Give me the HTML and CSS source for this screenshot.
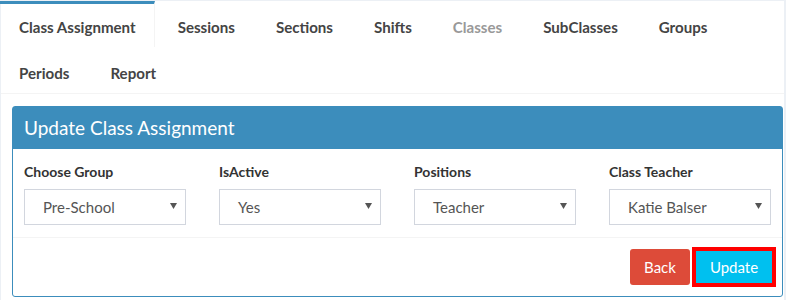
FILE: index.html
```html
<!DOCTYPE html>
<html lang="en">
<head>
  <meta charset="UTF-8">
  <title>Class Assignment</title>
  <link rel="stylesheet" href="styles.css">
</head>
<body>

  <div class="tabs-box">
    <ul class="nav-tabs">
      <li class="active"><a href="#">Class Assignment</a></li>
      <li><a href="#">Sessions</a></li>
      <li><a href="#">Sections</a></li>
      <li><a href="#">Shifts</a></li>
      <li class="disabled"><a href="#">Classes</a></li>
      <li><a href="#">SubClasses</a></li>
      <li><a href="#">Groups</a></li>
      <li><a href="#">Periods</a></li>
      <li><a href="#">Report</a></li>
    </ul>

    <div class="tab-content">
      <div class="panel">
        <div class="panel-heading">Update Class Assignment</div>
        <div class="panel-body">
          <div class="field">
            <label>Choose Group</label>
            <div class="select"><span>Pre-School</span><svg class="caret" viewBox="0 0 7 6"><polygon points="0,0 7,0 3.5,6"/></svg></div>
          </div>
          <div class="field">
            <label>IsActive</label>
            <div class="select"><span>Yes</span><svg class="caret" viewBox="0 0 7 6"><polygon points="0,0 7,0 3.5,6"/></svg></div>
          </div>
          <div class="field">
            <label>Positions</label>
            <div class="select"><span>Teacher</span><svg class="caret" viewBox="0 0 7 6"><polygon points="0,0 7,0 3.5,6"/></svg></div>
          </div>
          <div class="field">
            <label>Class Teacher</label>
            <div class="select"><span>Katie Balser</span><svg class="caret" viewBox="0 0 7 6"><polygon points="0,0 7,0 3.5,6"/></svg></div>
          </div>
        </div>
        <div class="panel-footer">
          <button class="btn btn-back">Back</button>
          <button class="btn btn-update">Update</button>
        </div>
      </div>
    </div>
  </div>

</body>
</html>
```

FILE: styles.css
```css
body {
  margin: 0;
  font-family: Lato, "Liberation Sans", sans-serif;
  background-color: #ecf0f5;
  color: #333;
}
.tabs-box {
  background-color: #fff;
  margin-left: 1px;
  margin-top: 1px;
  margin-right: 2px;
  height: 299px;
}
.nav-tabs {
  list-style: none;
  margin: 0;
  padding: 0;
  display: flex;
  flex-wrap: wrap;
  border-bottom: 1px solid #f4f4f4;
}
.nav-tabs li {
  margin-right: 5px;
  border-top: 3px solid transparent;
}
.nav-tabs li a {
  display: block;
  padding: 0 18px;
  height: 43px;
  line-height: 46px;
  font-size: 15.1px;
  font-weight: bold;
  color: #444;
  text-decoration: none;
}
.nav-tabs li.active {
  border-top-color: #3c8dbc;
  border-right: 1px solid #f4f4f4;
  margin-left: -1px;
  padding-left: 1px;
}
.nav-tabs li.disabled a {
  color: #999;
}
.tab-content {
  padding: 12px 1px 0 11px;
}
.panel {
  border: 1px solid #3c8dbc;
  border-radius: 3px;
  background-color: #fff;
}
.panel-heading {
  background-color: #3c8dbc;
  color: #fff;
  font-size: 19px;
  height: 42px;
  line-height: 42px;
  padding-left: 11px;
}
.panel-body {
  display: grid;
  grid-template-columns: repeat(4, 195px);
  padding: 14px 11px 12px;
  border-bottom: 1px solid #f4f4f4;
}
.field label {
  display: block;
  font-size: 14px;
  font-weight: bold;
  color: #333;
  line-height: 18px;
  margin-bottom: 8px;
}
.select {
  width: 162px;
  height: 36px;
  box-sizing: border-box;
  border: 1px solid #d2d6de;
  display: flex;
  align-items: center;
  justify-content: space-between;
  padding: 0 8px 0 18px;
  font-size: 15px;
  color: #555;
}
.caret {
  width: 7px;
  height: 6px;
  fill: #555;
  margin-top: -3px;
}
.panel-footer {
  display: flex;
  justify-content: flex-end;
  gap: 4px;
  padding: 11px 8px 11px 0;
}
.btn {
  height: 36px;
  border: none;
  border-radius: 3px;
  color: #fff;
  font-family: Lato, "Liberation Sans", sans-serif;
  font-size: 15px;
  cursor: pointer;
}
.btn-back {
  width: 60px;
  background-color: #dd4b39;
}
.btn-update {
  width: 80px;
  background-color: #00c0ef;
  border: 2px solid #ff0000;
  outline: 2px solid #ff0000;
  border-radius: 0;
}
```
